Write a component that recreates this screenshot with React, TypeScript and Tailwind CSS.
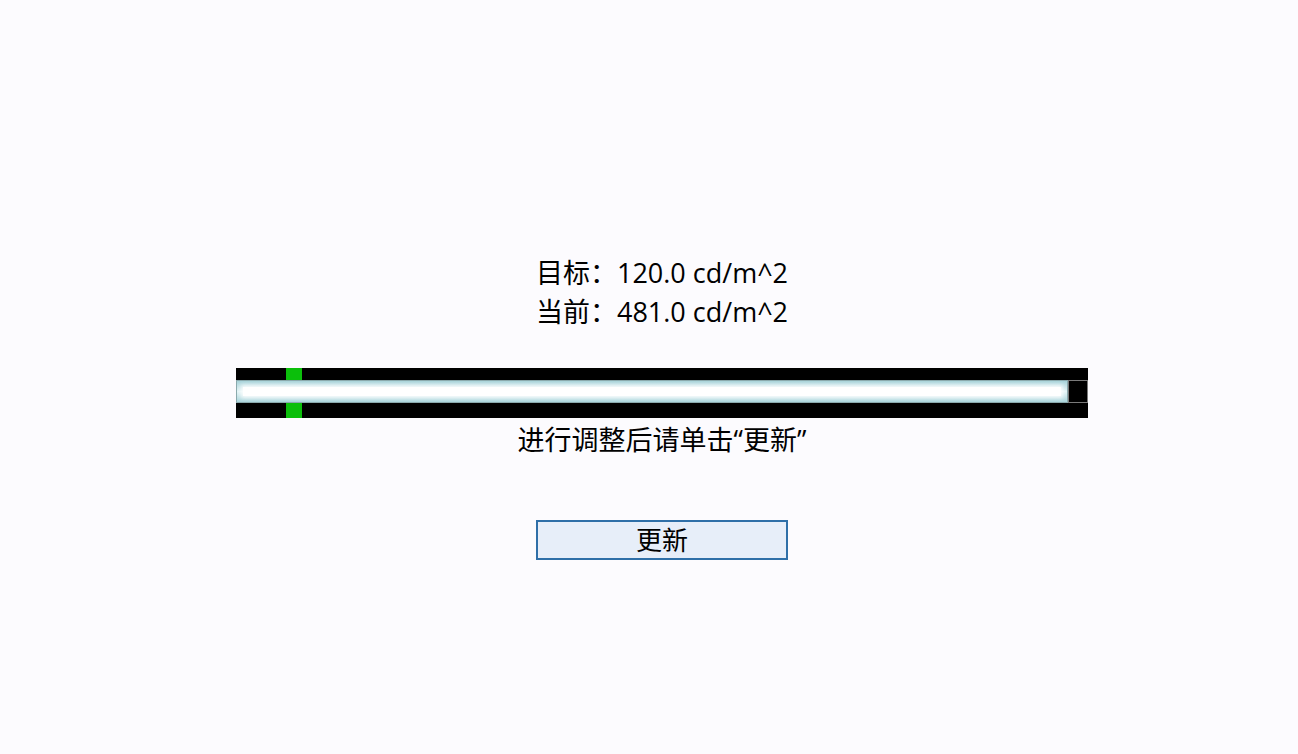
import React from 'react';

const font = { fontFamily: '"Open Sans", "Noto Sans CJK SC", sans-serif' };

export default function App() {
    return (
        <div className="w-full h-[754px] pl-[26px] bg-[#fcfbfe] text-black flex flex-col items-center" style={font}>
            {/* Readings */}
            <div className="pt-[253px] flex flex-col items-center text-[27px] leading-[39px]">
                <div>目标：120.0 cd/m^2</div>
                <div>当前：481.0 cd/m^2</div>
            </div>

            {/* Level bar */}
            <div className="mt-[37px] w-[852px] flex flex-col bg-black">
                <div className="h-[12px] flex">
                    <div className="ml-[50px] w-[16px] bg-[#0bbf0b]" />
                </div>
                <div className="h-[23px] flex">
                    <div className="flex-1 border border-[#8aa9ad] bg-linear-to-b from-[#a6d2d9] via-[#e4f4f6] to-[#a8d4db] flex items-center px-[6px]">
                        <div className="flex-1 h-[9px] bg-white shadow-[0_0_4px_2px_rgba(255,255,255,0.9)]" />
                    </div>
                    <div className="w-[20px] bg-black border border-[#7a7a7a]" />
                </div>
                <div className="h-[15px] flex">
                    <div className="ml-[50px] w-[16px] bg-[#0bbf0b]" />
                </div>
            </div>

            <div className="mt-[4px] text-[27px] leading-[36px]">进行调整后请单击“更新”</div>

            <button className="mt-[62px] w-[252px] h-[40px] border-2 border-[#2f6fa8] bg-[#e7eef9] text-[26px] leading-none flex items-center justify-center" style={font}>
                更新
            </button>
        </div>
    );
}
